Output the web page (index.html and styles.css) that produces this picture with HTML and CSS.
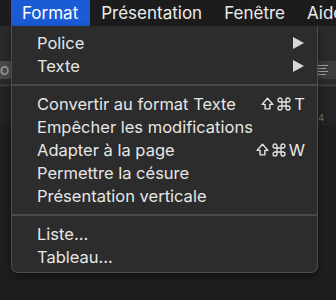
FILE: index.html
```html
<!DOCTYPE html>
<html lang="fr">
<head>
	<meta charset="UTF-8">
	<title>Format</title>
	<link rel="stylesheet" href="styles.css">
</head>
<body>
	<div class="menubar">
		<div class="mb-item active">Format</div>
		<div class="mb-item">Présentation</div>
		<div class="mb-item">Fenêtre</div>
		<div class="mb-item">Aide</div>
	</div>

	<div class="workspace">
		<div class="toolbar">
			<div class="tb-left"><span class="tb-btn">OU</span></div>
			<div class="tb-right">
				<span class="tb-btn lines"><i></i><i></i><i></i><i></i></span>
			</div>
		</div>
		<div class="ruler"><span class="tick">4</span></div>
		<div class="doc"></div>

		<div class="dropdown">
			<div class="group">
				<div class="item"><span>Police</span><span class="arrow"></span></div>
				<div class="item"><span>Texte</span><span class="arrow"></span></div>
			</div>
			<div class="sep"></div>
			<div class="group">
				<div class="item">
					<span>Convertir au format Texte</span>
					<span class="key">
						<svg class="shift" viewBox="0 0 12 12"><path d="M6 1.2 L11 6.8 H8.2 V11 H3.8 V6.8 H1 Z"/></svg>
						<svg class="cmd" viewBox="0 0 14 14"><path d="M5 5 V3 A2 2 0 1 0 3 5 H11 A2 2 0 1 0 9 3 V11 A2 2 0 1 0 11 9 H3 A2 2 0 1 0 5 11 Z"/></svg>
						T
					</span>
				</div>
				<div class="item"><span>Empêcher les modifications</span></div>
				<div class="item">
					<span>Adapter à la page</span>
					<span class="key">
						<svg class="shift" viewBox="0 0 12 12"><path d="M6 1.2 L11 6.8 H8.2 V11 H3.8 V6.8 H1 Z"/></svg>
						<svg class="cmd" viewBox="0 0 14 14"><path d="M5 5 V3 A2 2 0 1 0 3 5 H11 A2 2 0 1 0 9 3 V11 A2 2 0 1 0 11 9 H3 A2 2 0 1 0 5 11 Z"/></svg>
						W
					</span>
				</div>
				<div class="item"><span>Permettre la césure</span></div>
				<div class="item"><span>Présentation verticale</span></div>
			</div>
			<div class="sep"></div>
			<div class="group">
				<div class="item"><span>Liste…</span></div>
				<div class="item"><span>Tableau…</span></div>
			</div>
		</div>
	</div>
</body>
</html>
```

FILE: styles.css
```css
body{
	margin: 0;
	width: 336px;
	height: 300px;
	overflow: hidden;
	background-color: #1e1e1e;
	font-family: Inter, "Liberation Sans", sans-serif;
	color: #e4e4e4;
}
.menubar{
	display: flex;
	height: 26px;
	padding-left: 11px;
	overflow: hidden;
	background-color: #1c1c1c;
	font-size: 17px;
	line-height: 26px;
}
.mb-item{
	padding: 0 11px;
	white-space: nowrap;
	color: #ececec;
}
.mb-item.active{
	background-color: #1b5bd6;
	color: #fff;
	padding: 0 12px 0 11px;
}

.workspace{
	position: relative;
	height: 274px;
}
.toolbar{
	display: flex;
	justify-content: space-between;
	height: 58px;
	background-color: #2a2a2a;
	border-bottom: 2px solid #3a3a3a;
}
.tb-left, .tb-right{
	display: flex;
	align-items: flex-end;
	padding-bottom: 5px;
}
.tb-btn{
	display: flex;
	align-items: center;
	height: 18px;
	padding: 0 4px 0 0;
	background-color: #4a4a4a;
	color: #9a9a9a;
	font-size: 12px;
	font-weight: 600;
	letter-spacing: 1px;
}
.tb-btn.lines{
	flex-direction: column;
	justify-content: center;
	align-items: flex-start;
	gap: 2px;
	width: 12px;
	padding: 0 6px;
	background-color: #3c3c3c;
}
.tb-btn.lines i{
	display: block;
	width: 10px;
	height: 1px;
	background-color: #a0a0a0;
}
.tb-btn.lines i:nth-child(2n){
	width: 8px;
}
.ruler{
	display: flex;
	justify-content: flex-end;
	align-items: flex-end;
	height: 38px;
	background-color: #232323;
	border-top: 1px solid #2e2e2e;
}
.tick{
	padding: 0 12px 2px 0;
	font-size: 9px;
	color: #777;
}
.doc{
	height: 170px;
	background-color: #1e1e1e;
}

.dropdown{
	position: absolute;
	top: 0;
	left: 11px;
	width: 305px;
	padding: 5px 0 4px;
	background-color: #2c2c2c;
	border: 1px solid #4d4d4d;
	border-top: none;
	border-radius: 0 0 7px 7px;
	box-shadow: 0 4px 10px rgba(0,0,0,0.4);
	font-size: 16.5px;
}
.group{
	display: flex;
	flex-direction: column;
}
.item{
	display: flex;
	justify-content: space-between;
	align-items: center;
	height: 23px;
	padding: 0 12px 0 25px;
	color: #e6e6e6;
	white-space: nowrap;
}
.sep{
	height: 2px;
	margin: 7px 0 6px;
	background-color: #484848;
}
.arrow{
	width: 0;
	height: 0;
	margin-right: 1px;
	border-top: 6px solid transparent;
	border-bottom: 6px solid transparent;
	border-left: 11px solid #d8d8d8;
}
.key{
	display: flex;
	align-items: center;
	gap: 3px;
	color: #e6e6e6;
}
.key svg{
	fill: none;
	stroke: #e6e6e6;
	stroke-width: 1.3;
	stroke-linejoin: round;
}
.shift{
	width: 13px;
	height: 13px;
}
.cmd{
	width: 14px;
	height: 14px;
	stroke-width: 1.4;
}
```
